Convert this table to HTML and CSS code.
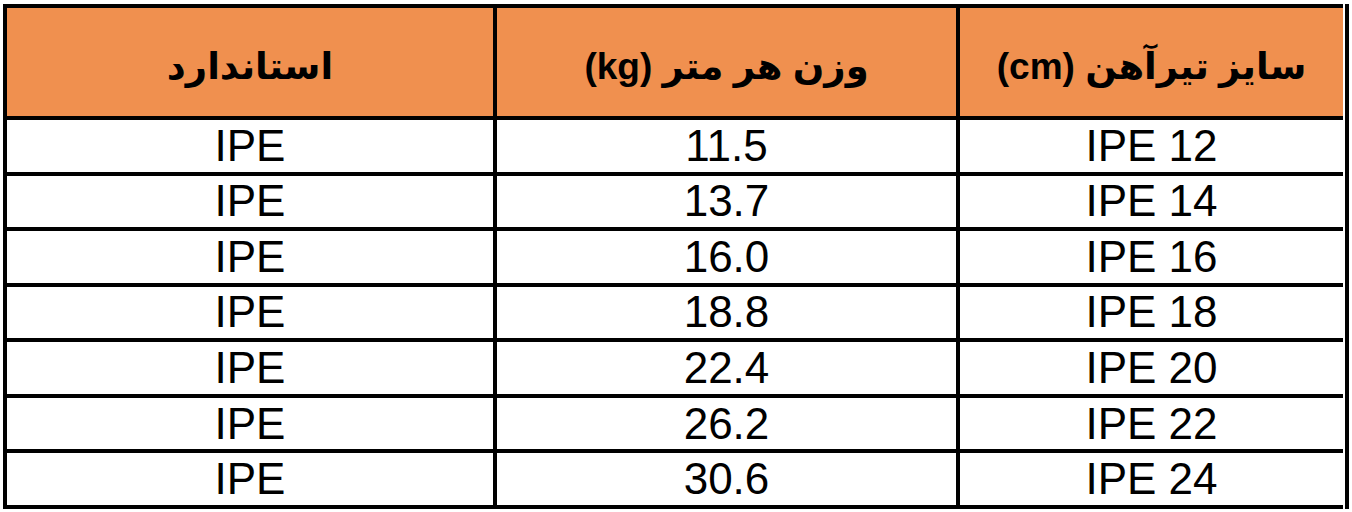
FILE: index.html
```html
<!DOCTYPE html>
<html lang="fa">
<head>
<meta charset="utf-8">
<title>جدول وزن تیرآهن IPE</title>
<link rel="stylesheet" href="styles.css">
</head>
<body>
<div class="frame">
  <div class="grid" dir="rtl">
    <div class="cell head">سایز تیرآهن (cm)</div>
    <div class="cell head">وزن هر متر (kg)</div>
    <div class="cell head">استاندارد</div>

    <div class="cell">IPE 12</div><div class="cell">11.5</div><div class="cell">IPE</div>
    <div class="cell">IPE 14</div><div class="cell">13.7</div><div class="cell">IPE</div>
    <div class="cell">IPE 16</div><div class="cell">16.0</div><div class="cell">IPE</div>
    <div class="cell">IPE 18</div><div class="cell">18.8</div><div class="cell">IPE</div>
    <div class="cell">IPE 20</div><div class="cell">22.4</div><div class="cell">IPE</div>
    <div class="cell">IPE 22</div><div class="cell">26.2</div><div class="cell">IPE</div>
    <div class="cell">IPE 24</div><div class="cell">30.6</div><div class="cell">IPE</div>
  </div>
</div>
</body>
</html>
```

FILE: styles.css
```css
html, body {
  margin: 0;
  padding: 0;
  background: #ffffff;
}

body {
  font-family: "Liberation Sans", "DejaVu Sans", Arial, sans-serif;
  color: #000;
  overflow: hidden;
}

.frame {
  display: flex;
  width: max-content;
  margin: 4px 0 0 3px;
  padding-right: 2px;
  border-right: 4px solid #000;
}

.grid {
  display: grid;
  background: #000;
  gap: 4px;
  padding: 4px 0 4px 4px;
  grid-template-columns: 383px 459px 486px;
  grid-template-rows: 108px repeat(7, 51.57px);
}

.cell {
  background: #fff;
  display: flex;
  align-items: center;
  justify-content: center;
  font-size: 44px;
  line-height: 1;
  direction: ltr;
  white-space: nowrap;
}

.head {
  background: #f0904f;
  font-weight: bold;
  font-size: 37px;
  direction: rtl;
  padding-top: 8px;
}
```
